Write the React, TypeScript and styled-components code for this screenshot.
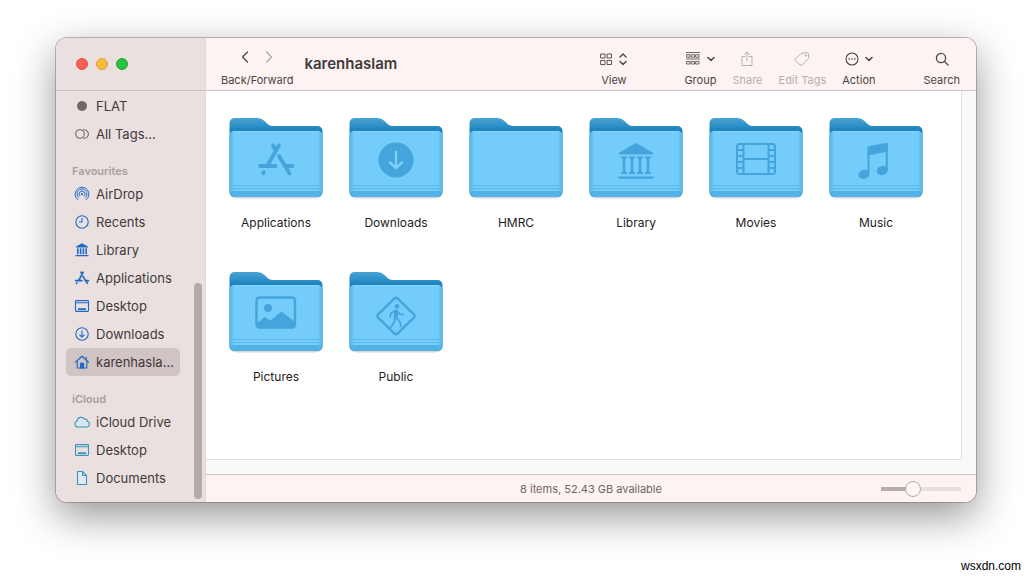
import React from "react";
import styled, { createGlobalStyle } from "styled-components";

const GlobalStyle = createGlobalStyle`
  * { box-sizing: border-box; }
  body { margin: 0; background: #fff; font-family: Inter, "Liberation Sans", sans-serif; color: #3f3a3a; }
  button { font: inherit; color: inherit; background: none; border: 0; padding: 0; margin: 0; }
  ul { list-style: none; margin: 0; padding: 0; }
`;

const Page = styled.div`
  min-height: 100vh;
  display: flex;
  flex-direction: column;
  justify-content: space-between;
  padding: 38px 0 0;
  overflow: hidden;
`;

const Window = styled.div`
  margin: 0 56px;
  display: grid;
  grid-template-columns: 150px 1fr;
  border-radius: 11px;
  overflow: hidden;
  box-shadow: 0 0 0 1px rgba(120, 95, 100, 0.45), 0 14px 40px rgba(0, 0, 0, 0.42);
`;

const Sidebar = styled.aside`
  position: relative;
  background: #eae0df;
  border-right: 1px solid #e2d8d7;
  padding-bottom: 10px;
`;

const TrafficLights = styled.div`
  height: 53px;
  display: flex;
  align-items: center;
  gap: 8px;
  margin-bottom: 1px;
  padding-left: 20px;
  border-bottom: 1px solid #c9bcbd;
`;

const Light = styled.button<{ $fill: string; $edge: string }>`
  width: 12px;
  height: 12px;
  border-radius: 50%;
  background: ${(p) => p.$fill};
  border: 1px solid ${(p) => p.$edge};
`;

const SectionTitle = styled.h2`
  margin: 14px 0 0 16px;
  font-size: 11px;
  line-height: 18px;
  font-weight: 600;
  color: #a89d9e;
`;

const SideLink = styled.a<{ $active?: boolean }>`
  display: flex;
  align-items: center;
  gap: 6px;
  height: 28px;
  width: 114px;
  margin-left: 10px;
  padding-left: 8px;
  border-radius: 5px;
  font-size: 13px;
  white-space: nowrap;
  color: #3f3a3a;
  text-decoration: none;
  background: ${(p) => (p.$active ? "#d0c4c4" : "transparent")};
`;

const ScrollThumb = styled.div`
  position: absolute;
  right: 3px;
  bottom: 3px;
  width: 8px;
  height: 216px;
  border-radius: 4px;
  background: #b3abab;
`;

const Main = styled.main`
  display: flex;
  flex-direction: column;
  min-width: 0;
`;

const Toolbar = styled.header`
  height: 53px;
  display: flex;
  align-items: center;
  padding: 0 16px 0 15px;
  background: #fdf3f2;
  border-bottom: 1px solid #cfc3c4;
`;

const Tool = styled.div<{ $muted?: boolean }>`
  display: flex;
  flex-direction: column;
  align-items: center;
  gap: 4px;
  padding-top: 10px;
  font-size: 11px;
  line-height: 16px;
  white-space: nowrap;
  color: ${(p) => (p.$muted ? "#b9afaf" : "#4a4444")};
`;

const ToolButton = styled.button`
  display: flex;
  flex-direction: column;
  align-items: center;
  gap: 4px;
`;

const IconRow = styled.span<{ $gap?: number }>`
  display: flex;
  align-items: center;
  justify-content: center;
  gap: ${(p) => p.$gap ?? 6}px;
  height: 18px;
`;

const Title = styled.h1`
  flex: 1;
  margin: 0 0 0 11px;
  font-size: 15px;
  line-height: 20px;
  font-weight: 600;
`;

const ToolGroup = styled.div`
  display: flex;
  gap: 16px;
  margin: 0 48px 0 57px;
`;

const Content = styled.div`
  flex: 1;
  display: flex;
  padding: 0 14px 14px 0;
  background: #faf9f9;
`;

const FolderGrid = styled.ul`
  && { padding: 22px 0 0 10px; }
  flex: 1;
  display: grid;
  grid-template-columns: repeat(auto-fill, 120px);
  grid-auto-rows: 154px;
  background: #fff;
  border-right: 1px solid #e3e0e0;
  border-bottom: 1px solid #e3e0e0;
`;

const FolderItem = styled.li`
  display: flex;
  flex-direction: column;
  align-items: center;
  gap: 14px;
  font-size: 12px;
  line-height: 20px;
  color: #1e1c1c;
`;

const StatusBar = styled.footer`
  height: 28px;
  display: grid;
  grid-template-columns: 1fr auto 1fr;
  align-items: center;
  padding: 0 15px;
  background: #fdf3f2;
  border-top: 1px solid #cbc5c5;
  font-size: 11px;
  color: #6d6565;
`;

const SizeSlider = styled.input`
  justify-self: end;
  appearance: none;
  width: 80px;
  height: 16px;
  margin: 0;
  background: linear-gradient(90deg, #b9abab 40%, #e9dedd 40%) center / 100% 4px no-repeat;
  &::-webkit-slider-thumb {
    appearance: none;
    width: 16px;
    height: 16px;
    border-radius: 50%;
    background: #fdf6f5;
    border: 1px solid #b5a9a9;
  }
`;

const Credit = styled.p`
  margin: 0 11px 0 0;
  text-align: right;
  font: 12px/20px "Liberation Sans", sans-serif;
  color: #000;
`;

/* Sidebar icons, drawn on a 16px grid */
const sideIcons: Record<string, React.ReactNode> = {
  dot: <circle cx="8" cy="8" r="5" fill="#6f696c" stroke="none" />,
  tags: (
    <g stroke="#6d6668">
      <circle cx="6" cy="8" r="4.3" />
      <path d="M9.200 3.800a4.300 4.300 0 1 1 0 8.400" />
    </g>
  ),
  airdrop: (
    <g strokeWidth="1">
      <path d="M4.200 13.900a6.900 6.900 0 1 1 7.600 0" />
      <path d="M4.900 11.700a4.900 4.900 0 1 1 6.200 0" />
      <path d="M6.100 10.200a2.900 2.900 0 1 1 3.800 0" />
      <circle cx="8" cy="8.200" r="1.100" fill="currentColor" stroke="none" />
    </g>
  ),
  clock: (
    <>
      <circle cx="8" cy="8" r="6.2" />
      <path d="M8 4v4H4.8" />
    </>
  ),
  library: (
    <g fill="currentColor" stroke="none">
      <path d="M8 1.200 14 4.600v1H2v-1zM3 6.200h1.600v6H3zm2.800 0h1.600v6H5.800zm2.800 0h1.600v6H8.600zm2.800 0H13v6h-1.600zM1.500 12.900h13v1.400h-13z" />
    </g>
  ),
  apps: (
    <g strokeWidth="1.700" strokeLinecap="round">
      <path d="M9.200 2.200 4.600 10.600M7 2.200l.9 1.600M9 6.400l4.400 7M1.700 10.700h6.100M11.200 10.700h3.200M3 12.900l-.3.500" />
    </g>
  ),
  desktop: (
    <>
      <rect x="1.500" y="2.600" width="13" height="10.800" rx="0.800" />
      <path d="M1.500 4.700h13" />
      <path d="M4 11.200h8" strokeWidth="1.800" />
    </>
  ),
  download: (
    <>
      <circle cx="8" cy="8" r="6.200" />
      <path d="M8 4.600v6.400M5.500 8.700 8 11.200l2.500-2.500" />
    </>
  ),
  home: (
    <>
      <path d="M1.200 8.400 8 2.200l6.800 6.200" strokeWidth="1.300" />
      <path d="M3.200 7.200v6.800h9.600V7.200M12.200 5.500V2.700" />
      <path d="M6.500 13.900V9.400h3v4.500z" fill="currentColor" />
    </>
  ),
  cloud: <path fill="#d8e6ee" d="M3.600 13h9a2.900 2.900 0 0 0 .7-5.700 2.200 2.200 0 0 0-2.700-2.200 4.100 4.100 0 0 0-7.500 1.900 3.100 3.100 0 0 0 .5 6z" />,
  document: (
    <>
      <path fill="#dfe9ef" d="M3.500 1.500h5l4 4v9h-9z" />
      <path d="M8.500 1.500v4h4" />
    </>
  ),
};

function SideIcon({ name, color }: { name: string; color: string }) {
  return (
    <svg width="16" height="16" viewBox="0 0 16 16" fill="none" stroke={color} color={color} strokeWidth="1.100" aria-hidden="true">
      {sideIcons[name]}
    </svg>
  );
}

const BLUE = "#2268c8";
const TEAL = "#3f93bd";

const sections = [
  { title: "", items: [["dot", "FLAT", BLUE], ["tags", "All Tags...", BLUE]] },
  {
    title: "Favourites",
    items: [
      ["airdrop", "AirDrop", BLUE],
      ["clock", "Recents", BLUE],
      ["library", "Library", BLUE],
      ["apps", "Applications", BLUE],
      ["desktop", "Desktop", BLUE],
      ["download", "Downloads", BLUE],
      ["home", "karenhasla...", BLUE],
    ],
  },
  { title: "iCloud", items: [["cloud", "iCloud Drive", TEAL], ["desktop", "Desktop", TEAL], ["document", "Documents", TEAL]] },
];

/* Emblems pressed into the folder fronts, in folder coordinates */
const INK = "#45a4dc";
const emblems: Record<string, React.ReactNode> = {
  Applications: (
    <g stroke={INK} strokeWidth="3.800" strokeLinecap="round" fill="none">
      <path d="M49.800 28.500 38.500 48.500M44 28.500l2.500 4.500M31 49h15.500M58 49h5.500M34.800 55.200l-.6 1" />
      <path d="M50 39l10.500 17.500" />
    </g>
  ),
  Downloads: (
    <g fill="none">
      <circle cx="47" cy="43" r="17.500" fill={INK} />
      <path d="M47 35v15M41 45.500l6 5.500 6-5.500" stroke="#7dd0fa" strokeWidth="2.400" strokeLinecap="round" strokeLinejoin="round" />
    </g>
  ),
  Library: (
    <g fill={INK}>
      <path d="m47 26 16.500 9.500c1 .7.600 2-.7 2H31.200c-1.300 0-1.700-1.300-.7-2z" />
      <path d="M32 39.500h6v1.500l-1.700.7v13.100l1.700.7v1.500h-6v-1.500l1.700-.7V41.700L32 41z" />
      <path d="M40 39.500h6v1.500l-1.700.7v13.100l1.700.7v1.500h-6v-1.500l1.700-.7V41.700L40 41z" />
      <path d="M48 39.500h6v1.500l-1.700.7v13.100l1.700.7v1.500h-6v-1.500l1.700-.7V41.700L48 41z" />
      <path d="M56 39.500h6v1.500l-1.700.7v13.100l1.700.7v1.500h-6v-1.500l1.700-.7V41.700L56 41z" />
      <rect x="29" y="59.500" width="36" height="2.200" rx="1" />
    </g>
  ),
  Movies: (
    <g fill="none" stroke={INK} strokeWidth="2">
      <rect x="28" y="27" width="38" height="30" rx="2.500" />
      <path d="M34.500 27v30M59.500 27v30M34.500 42h25M28 33h6.500M28 39h6.500M28 45h6.500M28 51h6.500M59.500 33H66M59.500 39H66M59.500 45H66M59.500 51H66" />
    </g>
  ),
  Music: (
    <g fill={INK}>
      <path d="M38.500 30.500q0-1 1-1.200L57.500 25.700q1.300-.2 1.300 1V34.500L38.500 38.500z" />
      <path d="M38.500 34h2v23h-2zM56.800 29h2v24h-2z" />
      <ellipse cx="35" cy="57.300" rx="5.700" ry="4.500" transform="rotate(-18 35 57.300)" />
      <ellipse cx="53.300" cy="53.500" rx="5.700" ry="4.500" transform="rotate(-18 53.300 53.500)" />
    </g>
  ),
  Pictures: (
    <g>
      <rect x="27.500" y="26.500" width="38.500" height="30" rx="3" fill="none" stroke={INK} strokeWidth="2.400" />
      <circle cx="39" cy="37" r="4" fill={INK} />
      <path d="M28 52.500l7.500-6.500 6 3.500 11-9L66 51v4.500l-1.500 1H29.500L28 55.500z" fill={INK} />
    </g>
  ),
  Public: (
    <g fill="none" stroke={INK} strokeLinecap="round" strokeLinejoin="round">
      <path d="M45.500 27.300q1.500-1.300 3 0L65 43.500q1.300 1.500 0 3L48.500 62.700q-1.500 1.300-3 0L29 46.500q-1.300-1.500 0-3z" strokeWidth="2.400" />
      <circle cx="48" cy="35.200" r="2.300" fill={INK} stroke="none" />
      <path d="M47.200 40.500 46.700 46" strokeWidth="4" />
      <path d="m46 39.800-4 2.400-.8 3.800M48.500 40.500l2 2.500 4 .5M46 47.500l-1 4-3 4.500M48 47.500l3 3.500 1 4.500" strokeWidth="1.700" />
    </g>
  ),
};

function Folder({ name }: { name: string }) {
  return (
    <svg width="96" height="86" viewBox="-1 0 96 86" aria-hidden="true">
      <defs>
        <linearGradient id="back" x1="0" y1="0" x2="0" y2="1">
          <stop offset="0" stopColor="#4ba4d5" />
          <stop offset="0.16" stopColor="#1a82bd" />
          <stop offset="1" stopColor="#2b8fc8" />
        </linearGradient>
        <linearGradient id="edge" x1="0" y1="0" x2="1" y2="0">
          <stop offset="0" stopColor="#55b3e6" />
          <stop offset="0.05" stopColor="#73ccf9" />
          <stop offset="0.95" stopColor="#73ccf9" />
          <stop offset="1" stopColor="#55b3e6" />
        </linearGradient>
      </defs>
      <rect x="1" y="74" width="92" height="11.500" rx="6" fill="#000" opacity="0.160" />
      <path d="M.5 10.500q0-5.500 5.500-5.500h22.500q4 0 7 3l2.500 2.500q2.500 2.500 6 2.500H88q5.500 0 5.500 5.500v60q0 5.500-6 5.500h-81q-6 0-6-5.500z" fill="url(#back)" />
      <path d="M.5 23q0-5 5-5h83q5 0 5 5v55.500q0 5.500-6 5.500h-81q-6 0-6-5.500z" fill="url(#edge)" />
      <path d="M.5 78h93v.5q0 5.500-6 5.500h-81q-6 0-6-5.500z" fill="#53b2e5" />
      <path d="M.5 72.500h93M.5 75.500h93" stroke="#5fbaea" strokeWidth="1" />
      <path d="M4 18.500h86" stroke="#86d4fb" strokeWidth="1" />
      <g transform="translate(0 4)">{emblems[name]}</g>
    </svg>
  );
}

const folders = ["Applications", "Downloads", "HMRC", "Library", "Movies", "Music", "Pictures", "Public"];

function Glyph({ w, h = 16, children, sw = 1.1 }: { w: number; h?: number; sw?: number; children: React.ReactNode }) {
  return (
    <svg width={w} height={h} viewBox={`0 0 ${w} ${h}`} fill="none" stroke="currentColor" strokeWidth={sw} strokeLinecap="round" strokeLinejoin="round" aria-hidden="true">
      {children}
    </svg>
  );
}

const Chevron = () => (
  <Glyph w={8} sw={1.5}>
    <path d="M1 6.500 4 9.500l3-3" />
  </Glyph>
);

export default function App() {
  return (
    <Page>
      <GlobalStyle />
      <Window>
        <Sidebar>
          <TrafficLights>
            <Light aria-label="Close" $fill="#fb5f58" $edge="#dd4f4d" />
            <Light aria-label="Minimise" $fill="#fabb3c" $edge="#dca23a" />
            <Light aria-label="Zoom" $fill="#2ac23f" $edge="#23a535" />
          </TrafficLights>
          <nav>
            {sections.map((s) => (
              <React.Fragment key={s.title}>
                {s.title && <SectionTitle>{s.title}</SectionTitle>}
                <ul>
                  {s.items.map(([icon, label, color]) => (
                    <li key={label}>
                      <SideLink href="#" $active={icon === "home"}>
                        <SideIcon name={icon} color={color} />
                        {label}
                      </SideLink>
                    </li>
                  ))}
                </ul>
              </React.Fragment>
            ))}
          </nav>
          <ScrollThumb />
        </Sidebar>
        <Main>
          <Toolbar>
            <Tool>
              <IconRow $gap={16}>
                <button aria-label="Back">
                  <Glyph w={8} sw={1.200}><path d="M6.500 3 1.500 8l5 5" /></Glyph>
                </button>
                <button aria-label="Forward" disabled>
                  <Glyph w={8} sw={1.200}><path d="m1.500 3 5 5-5 5" opacity="0.45" /></Glyph>
                </button>
              </IconRow>
              Back/Forward
            </Tool>
            <Title>karenhaslam</Title>
            <Tool>
              <ToolButton>
                <IconRow $gap={7}>
                  <Glyph w={12} sw={0.900}>
                    <path d="M1 3h4v4H1zM7.500 3h4v4h-4zM1 9.500h4v4H1zM7.500 9.500h4v4h-4z" />
                  </Glyph>
                  <Glyph w={8} sw={1.400}><path d="M1 6l3-3 3 3M1 10.500l3 3 3-3" /></Glyph>
                </IconRow>
                View
              </ToolButton>
            </Tool>
            <ToolGroup>
              <Tool>
                <ToolButton>
                  <IconRow $gap={7}>
                    <Glyph w={14} sw={0.800}>
                      <path d="M.5 1.500h13M.5 8h13M1 3.700h3v2.500H1zM5.500 3.700h3v2.500h-3zM10 3.700h3v2.500h-3zM1 10.500h3V13H1zM5.500 10.500h3V13h-3zM10 10.500h3V13h-3z" />
                    </Glyph>
                    <Chevron />
                  </IconRow>
                  Group
                </ToolButton>
              </Tool>
              <Tool $muted>
                <ToolButton disabled>
                  <IconRow>
                    <Glyph w={12} sw={1}><path d="M4 5.500H1v9h10v-9H8M6 10V1M3.500 3.500 6 1l2.500 2.500" /></Glyph>
                  </IconRow>
                  Share
                </ToolButton>
              </Tool>
              <Tool $muted>
                <ToolButton disabled>
                  <IconRow>
                    <Glyph w={16} sw={1}>
                      <path d="M8.300 2.300 13 1.500q1.200 0 1.400 1.200l.2 4q0 .8-.6 1.400L8 14q-1 1-2 0L1.600 9.600q-1-1 0-2l5.300-4.700q.6-.5 1.400-.6z" />
                      <circle cx="11.800" cy="4.400" r="0.800" />
                    </Glyph>
                  </IconRow>
                  Edit Tags
                </ToolButton>
              </Tool>
              <Tool>
                <ToolButton>
                  <IconRow $gap={6}>
                    <Glyph w={14}>
                      <circle cx="7" cy="8" r="6" />
                      <path d="M4.200 8h.1M7 8h.1M9.800 8h.1" strokeWidth="1.600" />
                    </Glyph>
                    <Chevron />
                  </IconRow>
                  Action
                </ToolButton>
              </Tool>
            </ToolGroup>
            <Tool>
              <ToolButton>
                <IconRow>
                  <Glyph w={14} sw={1.300}>
                    <circle cx="6" cy="7" r="4.600" />
                    <path d="m9.500 10.500 3.500 3.500" />
                  </Glyph>
                </IconRow>
                Search
              </ToolButton>
            </Tool>
          </Toolbar>
          <Content>
            <FolderGrid>
              {folders.map((f) => (
                <FolderItem key={f}>
                  <Folder name={f} />
                  {f}
                </FolderItem>
              ))}
            </FolderGrid>
          </Content>
          <StatusBar>
            <span />
            <span>8 items, 52.43 GB available</span>
            <SizeSlider type="range" aria-label="Icon size" min={0} max={100} defaultValue={38} />
          </StatusBar>
        </Main>
      </Window>
      <Credit>wsxdn.com</Credit>
    </Page>
  );
}
